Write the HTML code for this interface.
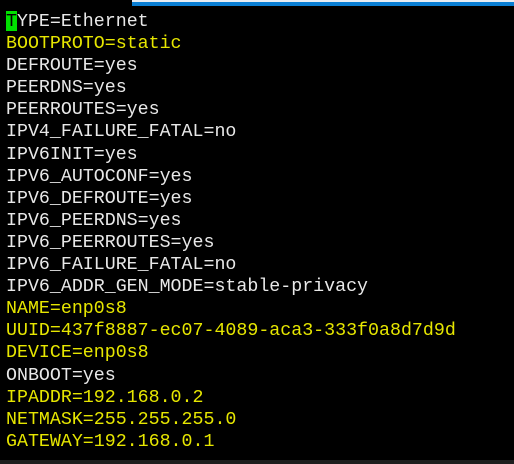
<!DOCTYPE html>
<html><head><meta charset="utf-8"><style>
html,body{margin:0;padding:0;background:#000;width:514px;height:464px;overflow:hidden;position:relative}
.top{position:absolute;left:132px;top:0;width:382px;height:2px;background:#e8eef4}
.blue{position:absolute;left:132px;top:2px;width:382px;height:4px;background:#0a7fd4}
.bot{position:absolute;left:0;top:460px;width:514px;height:4px;background:#1e1e1e}
pre{position:absolute;left:6px;top:11px;margin:0;font-family:"Liberation Mono",monospace;font-size:18.3px;line-height:22.1px;color:#e8e8e8}
.y{color:#e6e600}
.cur{position:absolute;left:6px;top:11px;width:11px;height:20px;background:#00e000}
</style></head><body>
<div class="top"></div><div class="blue"></div><div class="bot"></div>
<div class="cur"></div>
<pre><span style="color:#000">T</span>YPE=Ethernet
<span class="y">BOOTPROTO=static</span>
DEFROUTE=yes
PEERDNS=yes
PEERROUTES=yes
IPV4_FAILURE_FATAL=no
IPV6INIT=yes
IPV6_AUTOCONF=yes
IPV6_DEFROUTE=yes
IPV6_PEERDNS=yes
IPV6_PEERROUTES=yes
IPV6_FAILURE_FATAL=no
IPV6_ADDR_GEN_MODE=stable-privacy
<span class="y">NAME=enp0s8</span>
<span class="y">UUID=437f8887-ec07-4089-aca3-333f0a8d7d9d</span>
<span class="y">DEVICE=enp0s8</span>
ONBOOT=yes
<span class="y">IPADDR=192.168.0.2</span>
<span class="y">NETMASK=255.255.255.0</span>
<span class="y">GATEWAY=192.168.0.1</span></pre>
</body></html>
